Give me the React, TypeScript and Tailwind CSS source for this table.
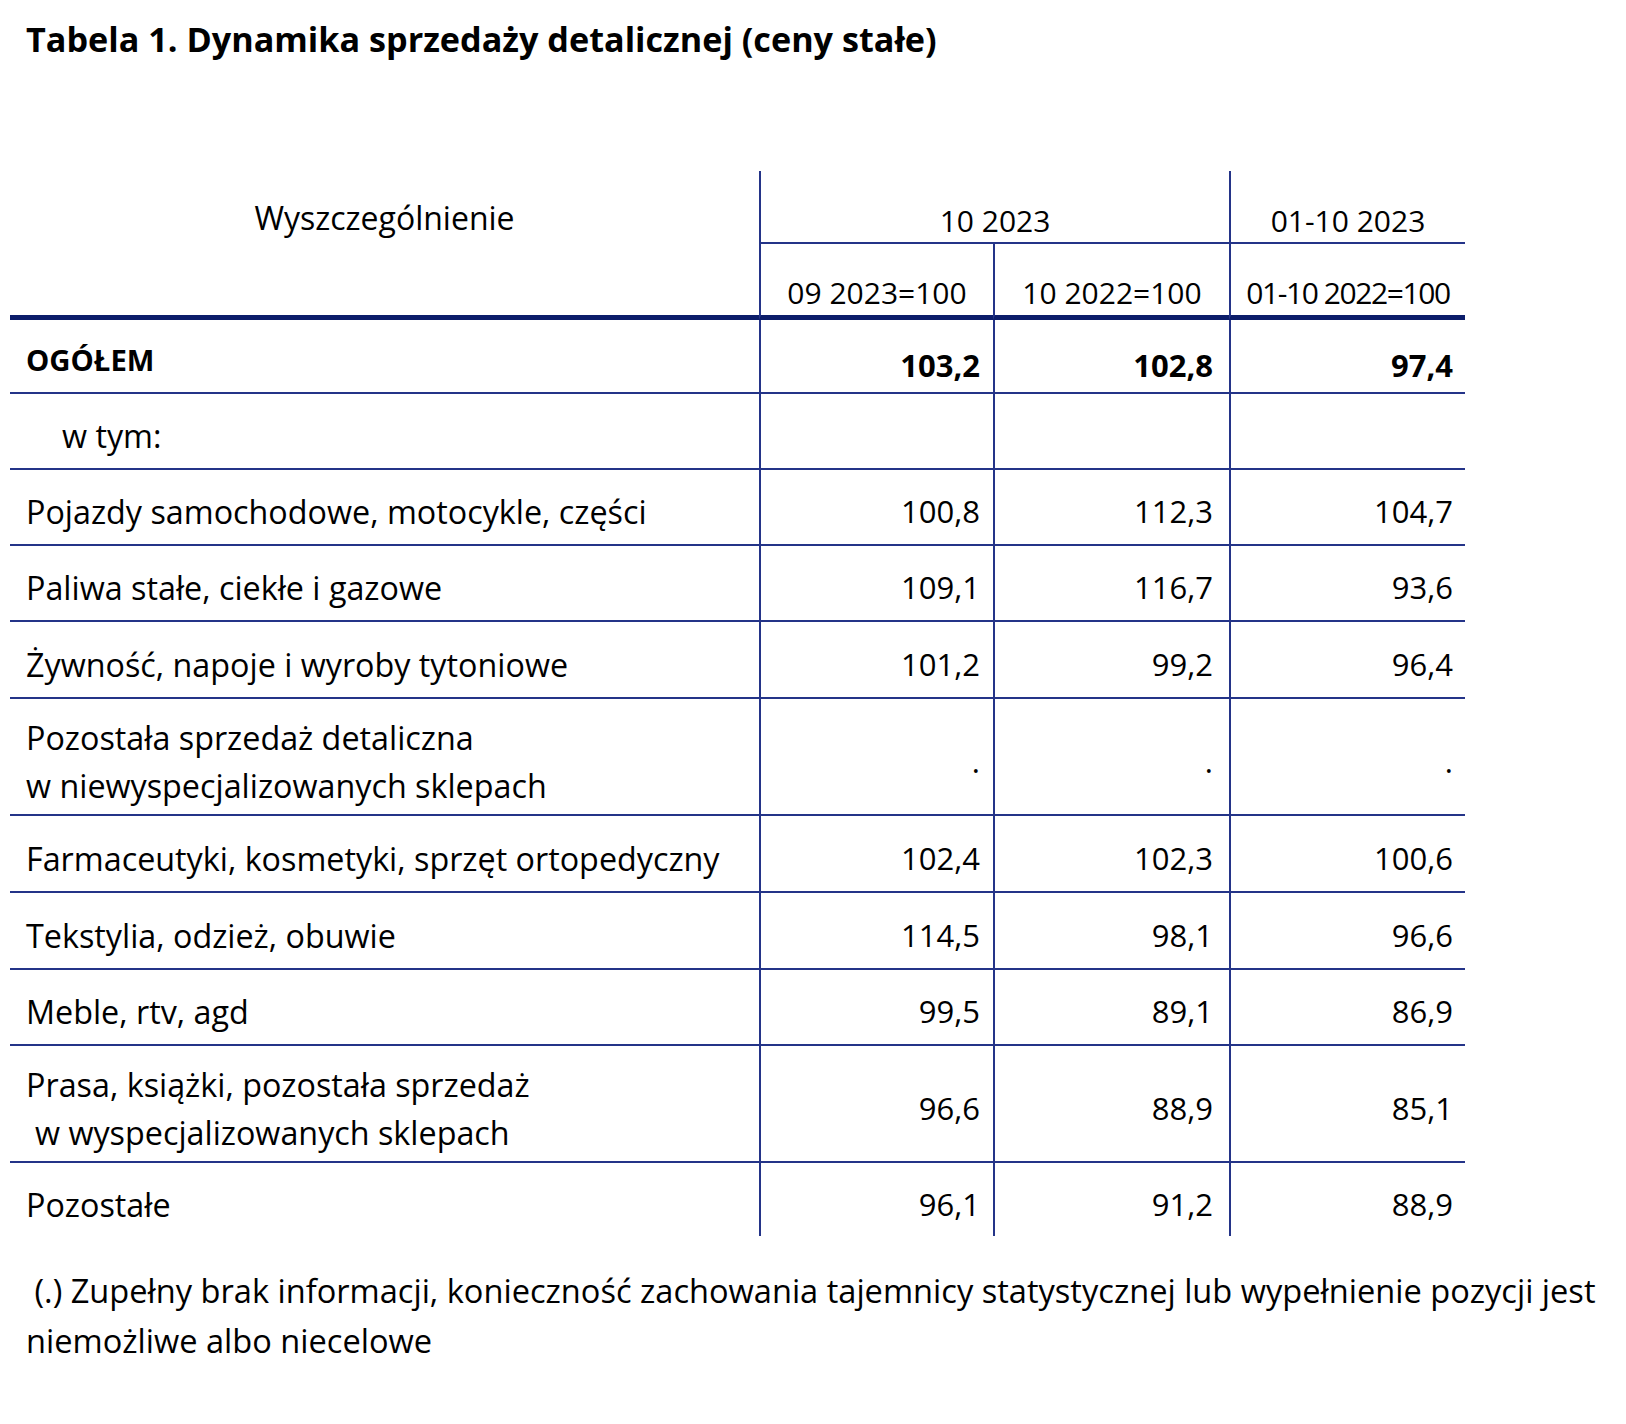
import React from 'react';

type Row = {
  label: React.ReactNode;
  values: string[];
  h: string;
  bold?: boolean;
  last?: boolean;
};

const rows: Row[] = [
  { label: 'OGÓŁEM', values: ['103,2', '102,8', '97,4'], h: 'h-[74px]', bold: true },
  { label: <span className="pl-[36px]">w tym:</span>, values: ['', '', ''], h: 'h-[76px]' },
  { label: 'Pojazdy samochodowe, motocykle, części', values: ['100,8', '112,3', '104,7'], h: 'h-[76px]' },
  { label: 'Paliwa stałe, ciekłe i gazowe', values: ['109,1', '116,7', '93,6'], h: 'h-[76px]' },
  { label: 'Żywność, napoje i wyroby tytoniowe', values: ['101,2', '99,2', '96,4'], h: 'h-[77px]' },
  {
    label: (
      <>
        Pozostała sprzedaż detaliczna
        <br />w niewyspecjalizowanych sklepach
      </>
    ),
    values: ['.', '.', '.'],
    h: 'h-[117px]',
  },
  { label: 'Farmaceutyki, kosmetyki, sprzęt ortopedyczny', values: ['102,4', '102,3', '100,6'], h: 'h-[77px]' },
  { label: 'Tekstylia, odzież, obuwie', values: ['114,5', '98,1', '96,6'], h: 'h-[77px]' },
  { label: 'Meble, rtv, agd', values: ['99,5', '89,1', '86,9'], h: 'h-[76px]' },
  {
    label: (
      <>
        Prasa, książki, pozostała sprzedaż
        <br />
        <span className="pl-[9px]">w wyspecjalizowanych sklepach</span>
      </>
    ),
    values: ['96,6', '88,9', '85,1'],
    h: 'h-[117px]',
  },
  { label: 'Pozostałe', values: ['96,1', '91,2', '88,9'], h: 'h-[73px]', last: true },
];

const valuePad = ['pr-[13px]', 'pr-[16px]', 'pr-[12px]'];

export default function App() {
  return (
    <div
      className="w-[1626px] h-[1424px] bg-white text-black"
      style={{ fontFamily: '"Open Sans", "Noto Sans", sans-serif' }}
    >
      <h1 className="pl-[26px] pt-[19px] text-[34.2px] font-bold leading-[40px] whitespace-nowrap">
        Tabela 1. Dynamika sprzedaży detalicznej (ceny stałe)
      </h1>

      <div className="ml-[10px] mt-[112px] grid w-[1455px] grid-cols-[749px_234px_236px_236px] text-[30px]">
        {/* nagłówek */}
        <div className="row-span-2 flex h-[149px] items-start justify-center border-b-[5px] border-[#0c1d6a] pt-[31px] text-[32px] leading-[32px]">
          Wyszczególnienie
        </div>
        <div className="col-span-2 flex h-[73px] items-end justify-center border-b-2 border-l-2 border-[#243488] pb-[5px] leading-[32px]">
          10 2023
        </div>
        <div className="flex h-[73px] items-end justify-center border-b-2 border-l-2 border-[#243488] pb-[5px] leading-[32px]">
          01-10 2023
        </div>
        <div className="flex h-[76px] items-end justify-center border-b-[5px] border-l-2 border-b-[#0c1d6a] border-l-[#243488] pb-[6px] leading-[32px]">
          09 2023=100
        </div>
        <div className="flex h-[76px] items-end justify-center border-b-[5px] border-l-2 border-b-[#0c1d6a] border-l-[#243488] pb-[6px] leading-[32px]">
          10 2022=100
        </div>
        <div className="flex h-[76px] items-end justify-center border-b-[5px] border-l-2 border-b-[#0c1d6a] border-l-[#243488] pb-[6px] leading-[32px] tracking-[-1.4px]">
          01-10 2022=100
        </div>

        {/* dane */}
        {rows.map((row, i) => (
          <React.Fragment key={i}>
            <div
              className={`${row.h} flex items-center pl-[16px] pt-[8px] leading-[48px] border-[#243488] whitespace-nowrap ${
                row.last ? '' : 'border-b-2'
              } ${row.bold ? 'font-bold text-[29.3px]' : 'text-[32.3px]'}`}
            >
              <div>{row.label}</div>
            </div>
            {row.values.map((v, j) => (
              <div
                key={j}
                className={`${row.h} flex items-center justify-end border-l-2 border-[#243488] text-[31px] ${valuePad[j]} ${
                  row.bold ? 'pt-[18px] font-bold' : 'pt-[8px]'
                } ${row.last ? '' : 'border-b-2'} leading-[32px]`}
              >
                {v}
              </div>
            ))}
          </React.Fragment>
        ))}
      </div>

      <p className="mt-[30px] pl-[26px] text-[32.6px] leading-[50px] whitespace-nowrap">
        &nbsp;(.) Zupełny brak informacji, konieczność zachowania tajemnicy statystycznej lub wypełnienie pozycji jest
        <br />
        niemożliwe albo niecelowe
      </p>
    </div>
  );
}
